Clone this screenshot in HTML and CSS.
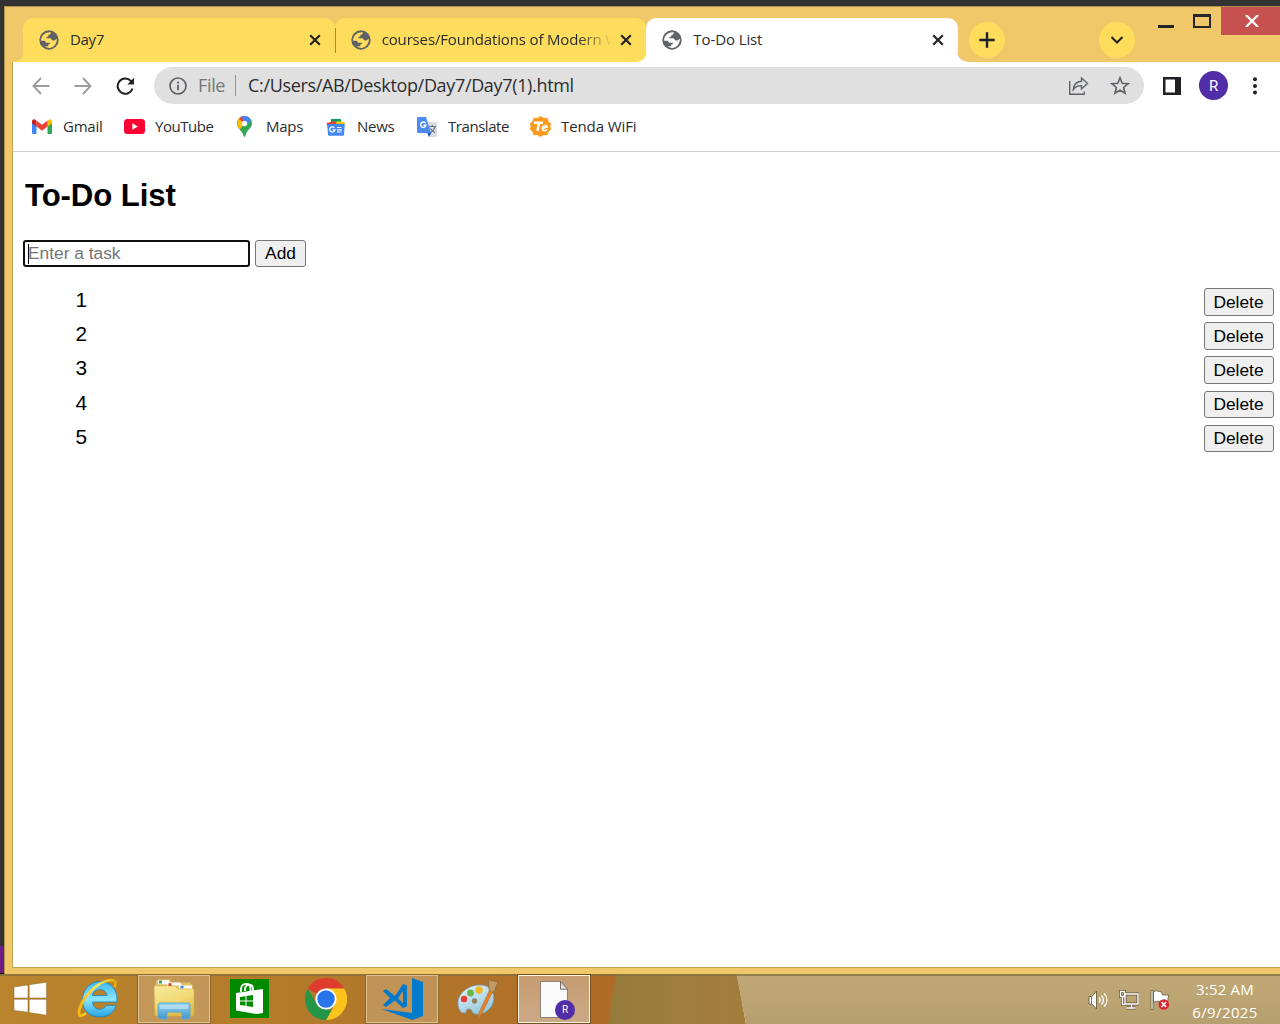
FILE: index.html
```html
<!DOCTYPE html>
<html lang="en">
<head>
<meta charset="utf-8">
<title>To-Do List</title>
<link rel="stylesheet" href="styles.css">
</head>
<body>
<svg class="defs" width="0" height="0" aria-hidden="true">
  <symbol id="globe" viewBox="0 0 20 20"><circle cx="10" cy="10" r="9.700" fill="#5f6368"/><path d="M11.800 2.200c.2 1.700-.8 2.600-2.400 2.600v1.500c-.7.900-2 .4-2.300 1.900h4.200c1.300.2 1.300 1.900 2.500 2.300h1.700l2.300-1.700C18.200 13.500 15 17.500 10.800 17.900 9 18 7 17.500 5.600 16.600l3.600-.3v-1.500c1-.8 1.900-1 2-2.100H7.300c-1-.3-.6-1.700-1.800-2H2.100C2 5.800 6 1.600 11.800 2.200z" class="globe-land"/></symbol>
  <symbol id="cross" viewBox="0 0 12 12"><path d="M1.200 1.200l9.600 9.600M10.800 1.200l-9.600 9.600" stroke="#202124" stroke-width="2.100"/></symbol>
</svg>
<div class="screen">
  <div class="desktop-area">
    <div class="desktop-edge"></div>
    <div class="window">
      <header class="tabstrip">
        <div class="tabs">
          <div class="tab first"><svg class="fav" width="20" height="20"><use href="#globe"/></svg><span class="title t-day">Day7</span><svg width="12" height="12"><use href="#cross"/></svg></div>
          <div class="tab second"><svg class="fav" width="20" height="20"><use href="#globe"/></svg><span class="title t-courses">courses/Foundations of Modern W</span><svg width="12" height="12"><use href="#cross"/></svg></div>
          <div class="tab active"><svg class="fav" width="20" height="20"><use href="#globe"/></svg><span class="title t-todo">To-Do List</span><svg width="12" height="12"><use href="#cross"/></svg></div>
        </div>
        <div class="round plus"><svg width="16" height="16" viewBox="0 0 16 16"><path d="M8 .3v15.400M.3 8h15.400" stroke="#202124" stroke-width="2.400"/></svg></div>
        <div class="round search"><svg width="14" height="10" viewBox="0 0 14 10"><path d="M1.500 2l5.500 5.500L12.500 2" fill="none" stroke="#202124" stroke-width="2"/></svg></div>
        <div class="controls">
          <svg width="48" height="28" viewBox="0 0 48 28"><path d="M16 18h16v3H16z" fill="#262626"/></svg>
          <svg width="31" height="28" viewBox="0 0 31 28"><path d="M3 7h18v14H3zM5 10v9h14v-9z" fill="#262626" fill-rule="evenodd"/></svg>
          <div class="close"><svg width="14" height="12" viewBox="0 0 14 12"><path d="M1 0l12 12M13 0L1 12" stroke="#fff" stroke-width="2.200"/></svg></div>
        </div>
      </header>
      <div class="client">
        <nav class="toolbar">
          <svg class="back" width="18" height="18" viewBox="0 0 18 18"><path d="M17.500 9H2M9 1L1.500 9L9 17" fill="none" stroke="#9b9c9e" stroke-width="1.900"/></svg>
          <svg class="forward" width="18" height="18" viewBox="0 0 18 18"><path d="M.5 9H16M9 1l7.500 8L9 17" fill="none" stroke="#9b9c9e" stroke-width="1.900"/></svg>
          <svg class="reload" width="19" height="18" viewBox="0 0 19 18"><path d="M16.500 11.500A7.600 7.600 0 1 1 14.800 3.900L16.500 5.500" fill="none" stroke="#202124" stroke-width="2.100"/><path d="M18 .8v6.700h-6.700z" fill="#202124"/></svg>
          <div class="omnibox">
            <svg width="18" height="18" viewBox="0 0 18 18"><circle cx="9" cy="9" r="8" fill="none" stroke="#5f6368" stroke-width="1.700"/><path d="M8.100 7.700h1.800v5.500H8.100zM8.100 4.600h1.800v1.900H8.100z" fill="#5f6368"/></svg>
            <span class="scheme">File</span><span class="divider"></span><span class="url">C:/Users/AB/Desktop/Day7/Day7(1).html</span>
            <svg class="share" width="21" height="20" viewBox="0 0 21 20"><path d="M1.700 5v13.300h14.500V15.500" fill="none" stroke="#5f6368" stroke-width="1.400"/><path d="M5.300 13.500C5.700 8.500 9 5.500 13.500 5.200V2l6 5.500-6 5.500V9.600C10 9.500 7.500 10.500 5.300 13.500Z" fill="none" stroke="#5f6368" stroke-width="1.400"/></svg>
            <svg class="star" width="20" height="20" viewBox="0 0 20 20"><path d="M10 1.800l2.200 5.500 6 .4-4.600 3.800 1.500 5.800-5.100-3.200-5.100 3.200 1.500-5.800L1.800 7.700l6-.4z" fill="none" stroke="#5f6368" stroke-width="1.600"/></svg>
          </div>
          <svg class="panel" width="18" height="18" viewBox="0 0 18 18"><path d="M0 0h18v18H0zM2.500 2.500v13H12v-13z" fill="#202124" fill-rule="evenodd"/></svg>
          <div class="avatar">R</div>
          <svg class="dots" width="4" height="18" viewBox="0 0 4 18"><circle cx="2" cy="2.300" r="2"/><circle cx="2" cy="9" r="2"/><circle cx="2" cy="15.500" r="2"/></svg>
        </nav>
        <nav class="bookmarks">
          <div class="bm gmail"><svg width="20" height="15" viewBox="0 0 20 15"><path d="M0 3v10.500A1.300 1.300 0 0 0 1.300 15h3.200V5.500z" fill="#4285f4"/><path d="M15.500 5.500V15h3.200a1.300 1.300 0 0 0 1.300-1.500V3z" fill="#34a853"/><path d="M0 2.500v1.700l4.500 3.500V2L3 .5C1.500-.3 0 .8 0 2.500z" fill="#c5221f"/><path d="M20 2.500v1.700l-4.500 3.500V2L17 .5c1.500-.8 3 .3 3 2z" fill="#fbbc04"/><path d="M4.500 1.600L10 5.800l5.500-4.200v6L10 11.700 4.500 7.600z" fill="#ea4335"/></svg><span>Gmail</span></div>
          <div class="bm youtube"><svg width="21" height="15" viewBox="0 0 21 15"><rect width="21" height="15" rx="3.500" fill="#ff0033"/><path d="M8.300 4.300v6.400l5.600-3.200z" fill="#fff"/></svg><span>YouTube</span></div>
          <div class="bm maps"><svg width="15" height="21" viewBox="0 0 15 21"><path d="M7.500 0A7.500 7.500 0 0 1 15 7.500c0 5-5.500 6-6.500 12.300-.2 1.500-1.700 1.500-2 0C5.800 15 0 13 0 7.500A7.500 7.500 0 0 1 7.500 0z" fill="#34a853"/><path d="M0 7.500C0 10.500 1.300 12 2.700 13.500L12.700 2A7.500 7.500 0 0 0 0 7.500z" fill="#fbbc04"/><path d="M1.800 2.700L6 6.300 10 .5A7.500 7.500 0 0 0 1.800 2.700z" fill="#ea4335"/><path d="M4.700.6a7.500 7.500 0 0 1 9.500 3.600L8.300 10z" fill="#4285f4"/><circle cx="7.500" cy="7.500" r="2.700" fill="#fff"/></svg><span>Maps</span></div>
          <div class="bm news"><svg width="20" height="18" viewBox="0 0 20 18"><path d="M5 1h10v7H5z" fill="#0c9d58"/><path d="M.5 5l8-2 2 7H2z" fill="#ea4335"/><path d="M11 3l8 1.300-2 6-8-2z" fill="#ffc107"/><path d="M1.200 6h17.600L18 16.500a1.300 1.300 0 0 1-1.300 1.300H3.300A1.300 1.300 0 0 1 2 16.500z" fill="#4285f4"/><path d="M8.300 9.700A2.600 2.600 0 1 0 8.900 12H6.700" fill="none" stroke="#fff" stroke-width="1.300"/><path d="M11 9.500h4.500M11 11.800h5M11 14h4.500" stroke="#fff" stroke-width="1.200"/></svg><span>News</span></div>
          <div class="bm translate"><svg width="20" height="20" viewBox="0 0 20 20"><path d="M8 5h10.700A1.200 1.200 0 0 1 20 6.200v12.600a1.200 1.200 0 0 1-1.200 1.200H12z" fill="#dadce0"/><path d="M10 15.500h4.500L12 20z" fill="#1a56db"/><path d="M1.300 0H9l5 16H1.300A1.300 1.300 0 0 1 0 14.700V1.300A1.300 1.300 0 0 1 1.300 0z" fill="#4c8bf5"/><path d="M8.500 6A2.700 2.700 0 1 0 9 8.300H6.500" fill="none" stroke="#fff" stroke-width="1.400"/><path d="M12 9.500h7M15.300 8v1.500M18 9.500c-.5 3-2.500 5-4.500 6.200M13.500 11.500c.7 1.500 3 3.500 4.500 4.200" fill="none" stroke="#60777e" stroke-width="1.100"/></svg><span>Translate</span></div>
          <div class="bm tenda"><svg width="21" height="21" viewBox="0 0 21 21"><path d="M10.500.5l3 1.800 3.800-.1.900 3.600 2.500 1.700-.8 3 .8 3-2.500 1.900-.9 3.400-3.800-.1-3 1.800-3-1.800-3.800.1-.9-3.400L.3 13.500l.8-3-.8-3 2.500-1.700.9-3.600 3.800.1z" fill="#fb9a1c" stroke="#fb9a1c" stroke-linejoin="round" stroke-width=".8"/><path d="M4 6.800h9M9 7.500l-1.600 7.500" stroke="#fff" stroke-width="2.500"/><path d="M12.300 12.500l5-1.600c-.4-2-4.300-1.700-5 1-.6 3 2.700 3.300 4.700 1.700" fill="none" stroke="#fff" stroke-width="1.600"/></svg><span>Tenda WiFi</span></div>
        </nav>
        <main class="page">
          <h1>To-Do List</h1>
          <div class="entry"><div class="field"><span class="caret"></span><span>Enter a task</span></div><button>Add</button></div>
          <ul>
            <li><span>1</span><button>Delete</button></li>
            <li><span>2</span><button>Delete</button></li>
            <li><span>3</span><button>Delete</button></li>
            <li><span>4</span><button>Delete</button></li>
            <li><span>5</span><button>Delete</button></li>
          </ul>
        </main>
      </div>
    </div>
  </div>
  <footer class="taskbar">
    <svg class="wallpaper" width="1280" height="50" viewBox="0 0 1280 50" preserveAspectRatio="none"><defs><linearGradient id="wood"><stop offset="0" stop-color="#ba842c"/><stop offset=".6" stop-color="#b1782a"/><stop offset="1" stop-color="#b06b27"/></linearGradient><linearGradient id="olive"><stop offset="0" stop-color="#957b3b"/><stop offset=".5" stop-color="#9f7e3e"/><stop offset="1" stop-color="#a37c3c"/></linearGradient><linearGradient id="sand" x2="0" y2="1"><stop stop-color="#c0a976"/><stop offset="1" stop-color="#b7a06f"/></linearGradient></defs><path d="M0 0h620v50H0z" fill="url(#wood)"/><path d="M616 0h121l9 50H608z" fill="url(#olive)"/><path d="M736.500 0H1280v50H746z" fill="url(#sand)"/><path d="M0 0h1280v2H0z" fill="#806e3c" opacity=".7"/></svg>
    <div class="start"><svg width="34" height="34" viewBox="0 0 34 34"><path d="M1 5l14-2v13H1zM16.200 2.800L33.500.2v15.800H16.200zM1 17.300h14v13L1 28.400zM16.200 17.300h17.300v15.900l-17.300-2.600z" fill="#fff" stroke="#8c6428" stroke-width=".5"/></svg></div>
    <div class="slot"><svg width="42" height="42" viewBox="0 0 42 42"><defs><linearGradient id="ie" x2="0" y2="1"><stop stop-color="#3bb6ee"/><stop offset=".5" stop-color="#8be5fd"/><stop offset="1" stop-color="#2ba4e4"/></linearGradient><linearGradient id="ring"><stop stop-color="#f8b90c"/><stop offset=".5" stop-color="#ffe65c"/><stop offset="1" stop-color="#e8a80b"/></linearGradient></defs><path d="M40 24H15.500c.3 8 10.500 9.800 13.500 3.500h10C37 35 30.500 39 23 39 12 39 5.500 32 5.500 22S13 3.500 23 3.500 41 11 40 24zM15.500 17.500H30c-.5-8-14-8-14.500 0z" fill="url(#ie)" stroke="#1686c8" stroke-width=".8" fill-rule="evenodd"/><path d="M9 35C3 40 .3 37.500 3 29.500 7 17.500 20 5 31 2.500c7-1.500 9 1.500 6.500 7" fill="none" stroke="url(#ring)" stroke-width="2.800"/></svg></div>
    <div class="slot open"><svg width="42" height="42" viewBox="0 0 42 42"><defs><linearGradient id="folder" x2=".4" y2="1"><stop stop-color="#f8e99c"/><stop offset=".6" stop-color="#f1d974"/><stop offset="1" stop-color="#dfbd4c"/></linearGradient><linearGradient id="glass" x2="0" y2="1"><stop stop-color="#99d4ef"/><stop offset="1" stop-color="#3f96ce"/></linearGradient></defs><path d="M4 1.500h13l2 3h18l3 4v6H2v-7z" fill="#dfc169"/><path d="M5 2.200h11v4H5z" fill="#fff"/><path d="M6 2.500h3v3H6z" fill="#35a467"/><path d="M14 4.500h13l2 3H14z" fill="#fff"/><path d="M15.500 5.200h3v3h-3z" fill="#db3b2f"/><path d="M1 9.500c0-1 1-1.500 2-1.500h19l3 3h16v25c0 1.500-1 2-2 2H2z" fill="url(#folder)" stroke="#d5ae41" stroke-width=".5"/><path d="M26 7.500h13v3H26z" fill="#fff"/><path d="M27.500 7.800h3v2.500h-3z" fill="#338bd5"/><path d="M7 25h28c1.500 0 2 1 2 2v10.500c0 2-1 3-2 3.500h-6v-7H14v7H8c-1.500-.5-3-1.500-3-3.500V27c0-1 .8-2 2-2z" fill="url(#glass)" stroke="#5eaccf" stroke-width="1"/><path d="M7 27h28v4H7z" fill="#c8eaf5" opacity=".6"/></svg></div>
    <div class="slot store"><svg width="39" height="39" viewBox="0 0 39 39"><path d="M0 0h39v39H0z" fill="#008a00"/><path d="M6 14l27-4v24L26.500 35 6 31.500z" fill="#fff"/><path d="M11 13V9.500C12 4 19.500 3 20.500 9v3M15 12V9c2-5 8-4 8 1v2" fill="none" stroke="#fff" stroke-width="1.800"/><path d="M10 18l5.500-.8v4.300H10zM16.500 17l6.500-1v5.500h-6.500zM10 22.500h5.500v4.300L10 26zM16.500 22.500H23V28l-6.500-1z" fill="#008a00"/></svg></div>
    <div class="slot"><svg width="42" height="42" viewBox="0 0 42 42"><path d="M21 21L2.800 10.500A21 21 0 0 1 39.200 10.500H21z" fill="#df3b2f"/><path d="M21 10.500h18.200A21 21 0 0 1 21 42l9.100-15.800z" fill="#fcc31c"/><path d="M2.800 10.500l9.100 15.700L21 31.500h6L21 42A21 21 0 0 1 2.800 10.500z" fill="#259548"/><circle cx="21" cy="21" r="10.600" fill="#fff"/><circle cx="21" cy="21" r="8.700" fill="#2874eb"/></svg></div>
    <div class="slot open"><svg width="42" height="42" viewBox="0 0 42 42"><path d="M31 0l11 4v34l-10.500 4L.5 31l30.500 4z" fill="#007acc"/><path d="M2 13l3-2 9 7L22 6l4 1.500v21L22 30l-8-7.500-9 6.500-3-2 7-7zM22 13l-5 7.200 5 5z" fill="#007acc" fill-rule="evenodd"/></svg></div>
    <div class="slot"><svg width="42" height="42" viewBox="0 0 42 42"><defs><linearGradient id="pal" x2=".5" y2="1"><stop stop-color="#e9f6fa"/><stop offset="1" stop-color="#99c9de"/></linearGradient></defs><path d="M1 26C0 16 11 7 23 7c11 0 16 9 13 18-3 8-12 13-18 11-4-1-2-5-6-5-5 0-1 5-5 4-4 0-6-5-6-9zM15 23a2.500 2.500 0 1 0 5 0 2.500 2.500 0 0 0-5 0z" fill="url(#pal)" stroke="#6c9ab1" stroke-width=".8" fill-rule="evenodd"/><circle cx="7" cy="21" r="3.200" fill="#e83d31"/><circle cx="13.500" cy="15" r="3.400" fill="#65b94b"/><circle cx="22" cy="12" r="3.700" fill="#f6b927"/><path d="M33 11l3 2-13 26-2 1 1-5z" fill="#e88325" stroke="#b86420" stroke-width=".6"/><path d="M31.500 1.500c3 2 6 1 9.500 3-1 3-3 4-3 8l-3 2-3-3z" fill="#c09b68" stroke="#856438" stroke-width=".6"/></svg></div>
    <div class="slot current"><svg class="doc" width="28" height="37" viewBox="0 0 28 37"><path d="M.5.500H21L27.500 8v28.500H.5z" fill="#fafafa" stroke="#8b8178"/><path d="M20.500.7v7.500h7z" fill="#e4e4e4" stroke="#75706a"/></svg><span class="badge">R</span></div>
    <div class="tray">
      <svg width="20" height="20" viewBox="0 0 20 20"><path d="M1 6.500h3L8.500 1v18L4 14H1z" fill="#fff" stroke="#65583d" stroke-width=".9"/><path d="M3.500 6.500V14" stroke="#897b60"/><path d="M11 7.500c1.500 1.500 1.500 3.500 0 5M13.500 5.500c2.500 2.500 2.500 6.500 0 9M16 3.500c4 4 4 9 0 13" fill="none" stroke="#fff" stroke-width="1.300"/></svg>
      <svg width="20" height="20" viewBox="0 0 20 20"><path d="M6 4h13v10H6zM12.500 14v4M7.500 18h9M3.500 6v8.500h2.500M1.500 1.500h4v5h-4z" fill="none" stroke="#61553e" stroke-width="3"/><path d="M6 4h13v10H6zM12.500 14v4M7.500 18h9M3.500 6v8.500h2.500M1.500 1.500h4v5h-4z" fill="none" stroke="#fff" stroke-width="1.400"/></svg>
      <svg width="20" height="20" viewBox="0 0 20 20"><path d="M1 .500h2v19H1zM3.500 1.500c4-1.500 4 0 8 .5l1 3h6l-1 8c-5 1-5-2-8-1.500-2-.5-4 0-6 1z" fill="#fff" stroke="#61553e" stroke-width=".8"/><circle cx="13.800" cy="14.500" r="5.300" fill="#dd2631"/><path d="M11.500 12l4.600 5M16.100 12l-4.600 5" stroke="#fff" stroke-width="1.600"/></svg>
    </div>
    <div class="clock"><span class="time">3:52 AM</span><span class="date">6/9/2025</span></div>
  </footer>
</div>
</body>
</html>
```

FILE: styles.css
```css
* { box-sizing: border-box; }
body { margin: 0; font-family: "Open Sans", "Noto Sans", sans-serif; }
svg { display: block; flex: none; }
.defs { position: absolute; }
.screen { width: 1280px; height: 1024px; overflow: hidden; display: flex; flex-direction: column; }
.desktop-area { height: 974px; padding-top: 6px; background: #323232; display: flex; }
.desktop-edge { width: 4px; background: linear-gradient(#323232 940px, #6d1d83 940px, #6d1d83 967px, #000 967px); }
.window { flex: 1; background: #f0c869; border-top: 1px solid #b1924d; border-left: 1px solid #b1924d; display: flex; flex-direction: column; }

.tabstrip { height: 55px; display: flex; padding-left: 18px; }
.tabs { display: flex; width: 935px; margin-top: 11px; height: 44px; }
.tab { flex: 1 1 0; min-width: 0; display: flex; align-items: center; padding: 0 14px 0 16px; background: #ffdd5c; border-radius: 10px; position: relative; --land: #ffdd5c; }
.globe-land { fill: var(--land); }
.fav { margin-top: -1px; }
.first::before, .active::before, .active::after { content: ""; position: absolute; bottom: 0; width: 10px; height: 10px; }
.first::before { left: -9px; background: radial-gradient(circle at 0 0, #f0c869 9px, #ffdd5c 10px); }
.first { border-radius: 10px 10px 0 0; }
.first::after { content: ""; position: absolute; right: -1px; top: 10px; height: 25px; width: 1px; background: #a0894a; z-index: 2; }
.second { border-radius: 10px 10px 10px 0; }
.active { background: #fff; border-radius: 10px 10px 0 0; --land: #fff; }
.active::before { left: -9px; background: radial-gradient(circle at 0 0, #ffdd5c 9px, #fff 10px); }
.active::after { right: -9px; background: radial-gradient(circle at 100% 0, #f0c869 9px, #fff 10px); }
.title { margin: -2px 14px 0 11px; flex: 1; min-width: 0; font-size: 15px; line-height: 22px; color: #2b2c2f; white-space: nowrap; letter-spacing: -.3px; }
.t-courses { letter-spacing: -.15px; margin-right: 0; -webkit-mask-image: linear-gradient(90deg, #000 82%, transparent 97%); mask-image: linear-gradient(90deg, #000 82%, transparent 97%); }
.t-todo { letter-spacing: -.1px; }
.round { width: 36px; height: 36px; border-radius: 50%; background: #ffdd5c; margin-top: 15px; display: flex; align-items: center; justify-content: center; }
.plus { margin-left: 11px; }
.search { margin-left: 94px; }
.controls { display: flex; margin-left: 7px; flex: 1; }
.close { flex: 1; height: 28px; background: #c75050; display: flex; align-items: center; justify-content: center; padding-left: 3px; }

.client { margin-left: 7px; height: 906px; border-left: 1px solid #c5a457; border-bottom: 1px solid #c1a354; background: #fff; }
.toolbar { height: 47px; display: flex; align-items: center; padding-left: 20px; }
.back { margin-left: -1px; }
.forward { margin-left: 24px; }
.reload { margin-left: 24px; }
.omnibox { margin-left: 19px; width: 990px; height: 37px; border-radius: 19px; background: #e0e0e0; display: flex; align-items: center; padding: 0 14px 0 15px; font-size: 18px; letter-spacing: -.34px; }
.scheme { color: #75777a; margin: -2px 0 0 11px; width: 27px; }
.divider { width: 1px; height: 21px; background: #919395; margin: 0 12px 0 10px; }
.url { color: #2b2c2f; flex: 1; white-space: nowrap; margin-top: -2px; }
.star { margin-left: 21px; }
.panel { margin-left: 19px; }
.avatar { width: 29px; height: 29px; margin-left: 18px; border-radius: 50%; background: #512da8; color: #fff; font: 15px/30px Roboto, sans-serif; text-align: center; }
.dots { margin-left: 25px; fill: #202124; }
.bookmarks { height: 43px; border-bottom: 1px solid #cfcfcf; display: flex; padding-left: 19px; font-size: 15px; color: #2b2c2f; letter-spacing: -.25px; }
.bm { display: flex; align-items: center; height: 35px; white-space: nowrap; }
.bm span { margin: -1px 0 0 10px; }
.gmail { width: 92px; }
.gmail span { margin-left: 11px; }
.youtube { width: 113px; letter-spacing: -.45px; }
.maps { width: 89px; }
.maps span { margin-left: 14px; }
.news { width: 91px; }
.news span { margin-left: 11px; }
.translate { width: 113px; letter-spacing: -.45px; }
.translate span { margin-left: 11px; }
.tenda { letter-spacing: -.1px; }

.page { padding: 23px 6px 0 10px; font-family: "Liberation Sans", Arial, sans-serif; color: #000; }
h1 { margin: 0 0 23px 2px; font-size: 31.200px; line-height: 42px; letter-spacing: -.1px; }
.entry { display: flex; gap: 5px; height: 27px; }
.field { width: 227px; border: 2px solid #101010; border-radius: 3px; padding-left: 3px; display: flex; align-items: center; color: #757575; font-size: 17.333px; }
.caret { width: 1px; height: 20px; margin-right: -1px; background: #000; }
button { margin: 0; padding: 0; border: 1px solid #767676; border-radius: 3px; background: #efefef; color: #000; font: 17.333px "Liberation Sans", Arial, sans-serif; width: 51px; }
ul { list-style: none; margin: 21px 0 0; padding: 0 0 0 52.500px; font-size: 20.800px; }
li { height: 34.200px; display: flex; justify-content: space-between; line-height: 24px; }
li button { width: 70px; height: 27.500px; padding: .6px 1px 0 0; }

.taskbar { position: relative; height: 50px; display: flex; }
.wallpaper { position: absolute; inset: 0; z-index: -1; }
.start { width: 60px; display: flex; align-items: center; justify-content: center; }
.slot { width: 72px; height: 48px; margin: 1px 2px; display: flex; align-items: center; justify-content: center; }
.store { padding: 0 2px 2px 0; }
.open, .current { border: 1px solid #dcc195; outline: 1px solid #8d682c; background: rgba(207, 176, 132, .5); }
.current { position: relative; border-color: #fff4e2; outline-color: #70501f; background: linear-gradient(#c69c70, #cba987); }
.badge { position: absolute; left: 36px; top: 24px; width: 20px; height: 20px; border-radius: 50%; background: #512da8; color: #fff; font: 10px/20px Roboto, sans-serif; text-align: center; }
.tray { display: flex; gap: 11px; align-items: center; margin-left: 496px; padding-top: 2px; }
.clock { flex: 1; margin-left: 20px; margin-right: 20px; color: #fff; font-size: 15px; line-height: 23px; padding-top: 4px; letter-spacing: .2px; display: flex; flex-direction: column; align-items: center; white-space: nowrap; }
.date { letter-spacing: .4px; }
```
